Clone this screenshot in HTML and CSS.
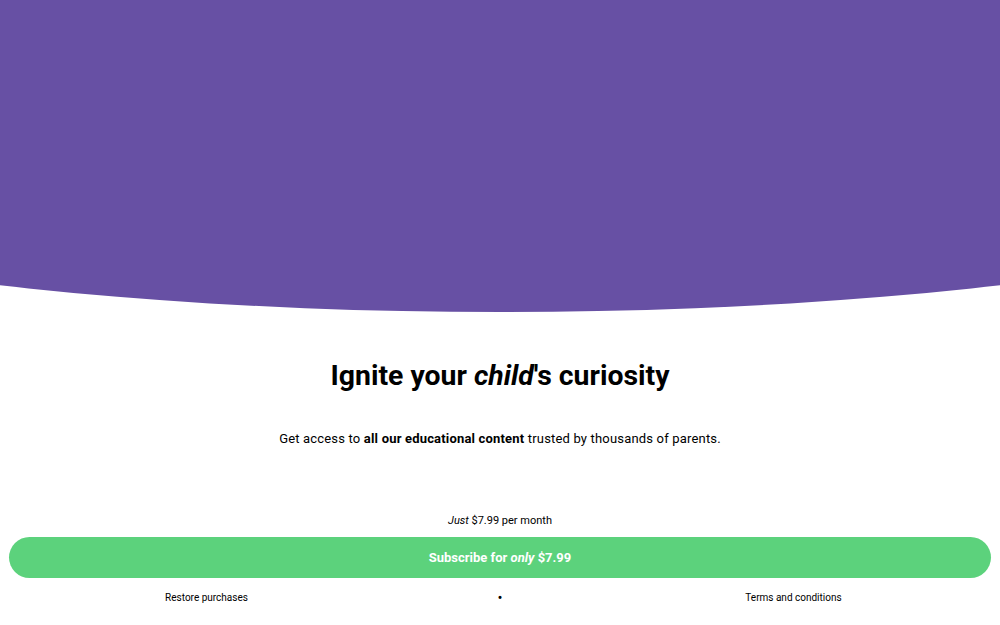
FILE: index.html
```html
<!DOCTYPE html>
<html lang="en">
<head>
<meta charset="utf-8">
<title>Subscribe</title>
<link rel="stylesheet" href="styles.css">
</head>
<body>
<div class="hero"></div>
<main class="content">
  <h1 class="title">Ignite your <em>child</em>'s curiosity</h1>
  <p class="subtitle">Get access to <strong>all our educational content</strong> trusted by thousands of parents.</p>
  <p class="price"><em>Just</em> $7.99 per month</p>
  <button class="cta">Subscribe for <em>only</em> $7.99</button>
  <nav class="links">
    <span class="link">Restore purchases</span>
    <span class="dot">•</span>
    <span class="link">Terms and conditions</span>
  </nav>
</main>
</body>
</html>
```

FILE: styles.css
```css
* { box-sizing: border-box; }
html, body { margin: 0; padding: 0; background: #fff; }
body {
  font-family: Roboto, "Liberation Sans", sans-serif;
  color: #000;
}
.hero {
  height: 312px;
  background: #6750a4;
  clip-path: ellipse(1000px 200px at 50% 112px);
}
.content {
  padding: 0 9px;
  display: flex;
  flex-direction: column;
  align-items: stretch;
}
.title {
  margin: 47px 0 0;
  font-size: 28.4px;
  line-height: 34px;
  font-weight: 700;
  text-align: center;
}
.title em { font-style: italic; }
.subtitle {
  margin: 36px 0 0;
  font-size: 13px;
  line-height: 20px;
  letter-spacing: 0.18px;
  text-align: center;
}
.subtitle strong { font-weight: 700; }
.price {
  margin: 64px 0 0;
  font-size: 11px;
  line-height: 16px;
  text-align: center;
}
.cta {
  margin-top: 8px;
  height: 41px;
  border: none;
  border-radius: 21px;
  background: #5cd27c;
  color: #fff;
  font-family: inherit;
  font-size: 13px;
  font-weight: 700;
}
.links {
  margin-top: 13px;
  display: grid;
  grid-template-columns: 1fr 192px 1fr;
  align-items: center;
  font-size: 10px;
  line-height: 14px;
  text-align: center;
}
.dot { font-size: 15px; line-height: 14px; }
```
